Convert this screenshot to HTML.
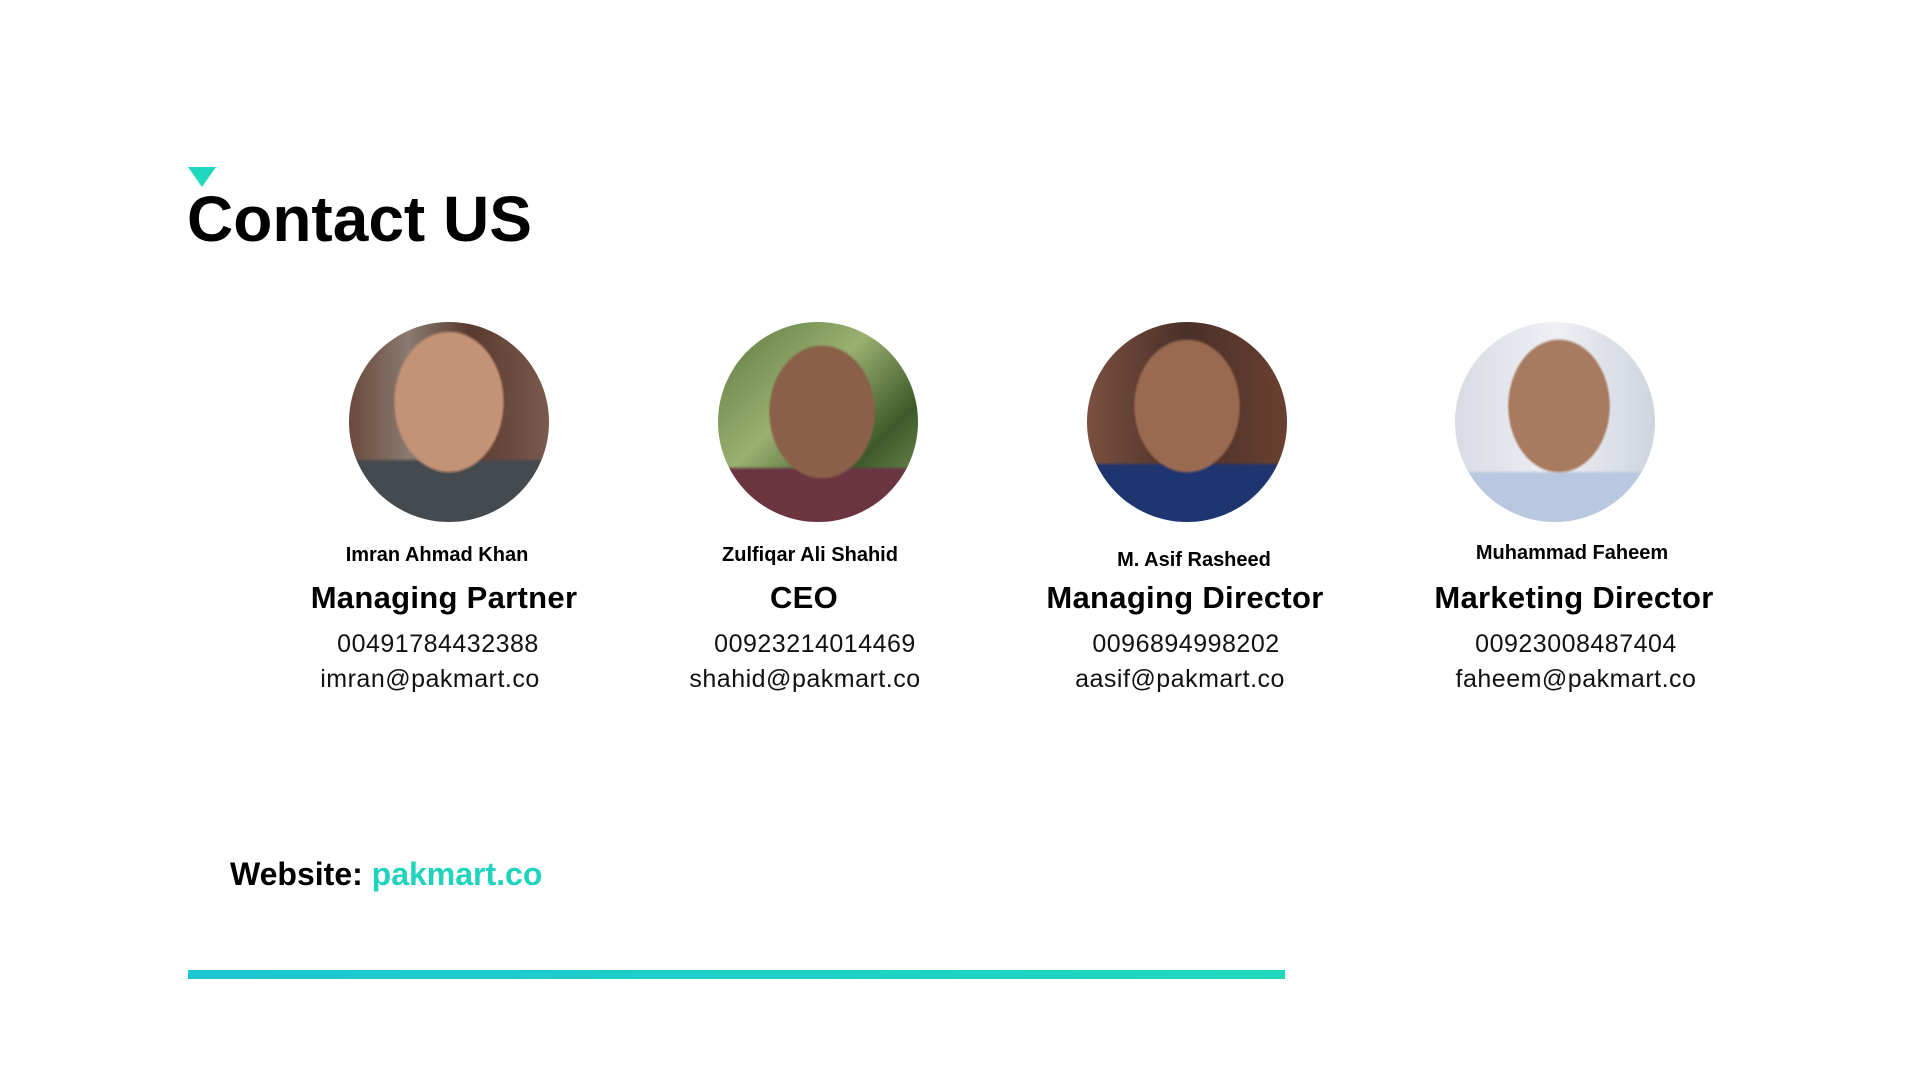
<!DOCTYPE html>
<html><head><meta charset="utf-8"><style>
body{margin:0;width:1920px;height:1080px;background:#fff;position:relative;overflow:hidden;font-family:"Liberation Sans",sans-serif;color:#000}
.a{position:absolute}
.tri{left:188px;top:167px;width:0;height:0;border-left:14px solid transparent;border-right:14px solid transparent;border-top:20px solid #1fd8bd}
h1{position:absolute;left:187px;top:182px;margin:0;font-size:64px;font-weight:bold;letter-spacing:0px}
.c{position:absolute;width:200px;height:200px;border-radius:50%;overflow:hidden}
.t{position:absolute;width:500px;text-align:center;white-space:nowrap}
.n{font-size:20px;font-weight:bold}
.ti{font-size:31px;font-weight:bold;letter-spacing:0.3px}
.p{font-size:25px;font-weight:300;letter-spacing:0.5px;color:#111}
.bar{left:188px;top:970px;width:1097px;height:9px;background:linear-gradient(90deg,#1cc6d2,#1fd8bc)}
.w{left:230px;top:856px;font-size:32px;font-weight:bold}
.w span{color:#1fd3bd}
</style></head><body>
<div class="a tri"></div>
<h1>Contact US</h1>

<div class="c" style="left:349px;top:322px;background:radial-gradient(ellipse 28% 36% at 50% 40%,#c49275 0 95%,transparent 100%),linear-gradient(180deg,transparent 68%,#454a4f 70%),linear-gradient(90deg,#6a4a3c,#8a7a70 30%,#5a3a2e 60%,#7a5a4c)"></div>
<div class="c" style="left:718px;top:322px;background:radial-gradient(ellipse 27% 34% at 52% 45%,#8a6048 0 95%,transparent 100%),linear-gradient(180deg,transparent 72%,#6a3440 74%),linear-gradient(135deg,#5d7a40,#9ab070 40%,#3e5a2a 70%,#809a60)"></div>
<div class="c" style="left:1087px;top:322px;background:radial-gradient(ellipse 27% 34% at 50% 42%,#9a6a50 0 95%,transparent 100%),linear-gradient(180deg,transparent 70%,#1e3570 72%),linear-gradient(90deg,#7a5040,#4a3028 50%,#6a4030)"></div>
<div class="c" style="left:1455px;top:322px;background:radial-gradient(ellipse 26% 34% at 52% 42%,#a87a60 0 95%,transparent 100%),linear-gradient(180deg,transparent 74%,#b8c8e0 76%),linear-gradient(90deg,#d8dbe4,#eef0f4 50%,#cfd4de)"></div>

<div class="t n" style="left:187px;top:544px">Imran Ahmad Khan</div>
<div class="t ti" style="left:194px;top:580px">Managing Partner</div>
<div class="t p" style="left:188px;top:630px">00491784432388</div>
<div class="t p" style="left:180px;top:665px">imran@pakmart.co</div>

<div class="t n" style="left:560px;top:544px">Zulfiqar Ali Shahid</div>
<div class="t ti" style="left:554px;top:580px">CEO</div>
<div class="t p" style="left:565px;top:630px">00923214014469</div>
<div class="t p" style="left:555px;top:665px">shahid@pakmart.co</div>

<div class="t n" style="left:944px;top:549px">M. Asif Rasheed</div>
<div class="t ti" style="left:935px;top:580px">Managing Director</div>
<div class="t p" style="left:936px;top:630px">0096894998202</div>
<div class="t p" style="left:930px;top:665px">aasif@pakmart.co</div>

<div class="t n" style="left:1322px;top:542px">Muhammad Faheem</div>
<div class="t ti" style="left:1324px;top:580px">Marketing Director</div>
<div class="t p" style="left:1326px;top:630px">00923008487404</div>
<div class="t p" style="left:1326px;top:665px">faheem@pakmart.co</div>

<div class="a w">Website: <span>pakmart.co</span></div>
<div class="a bar"></div>
</body></html>
